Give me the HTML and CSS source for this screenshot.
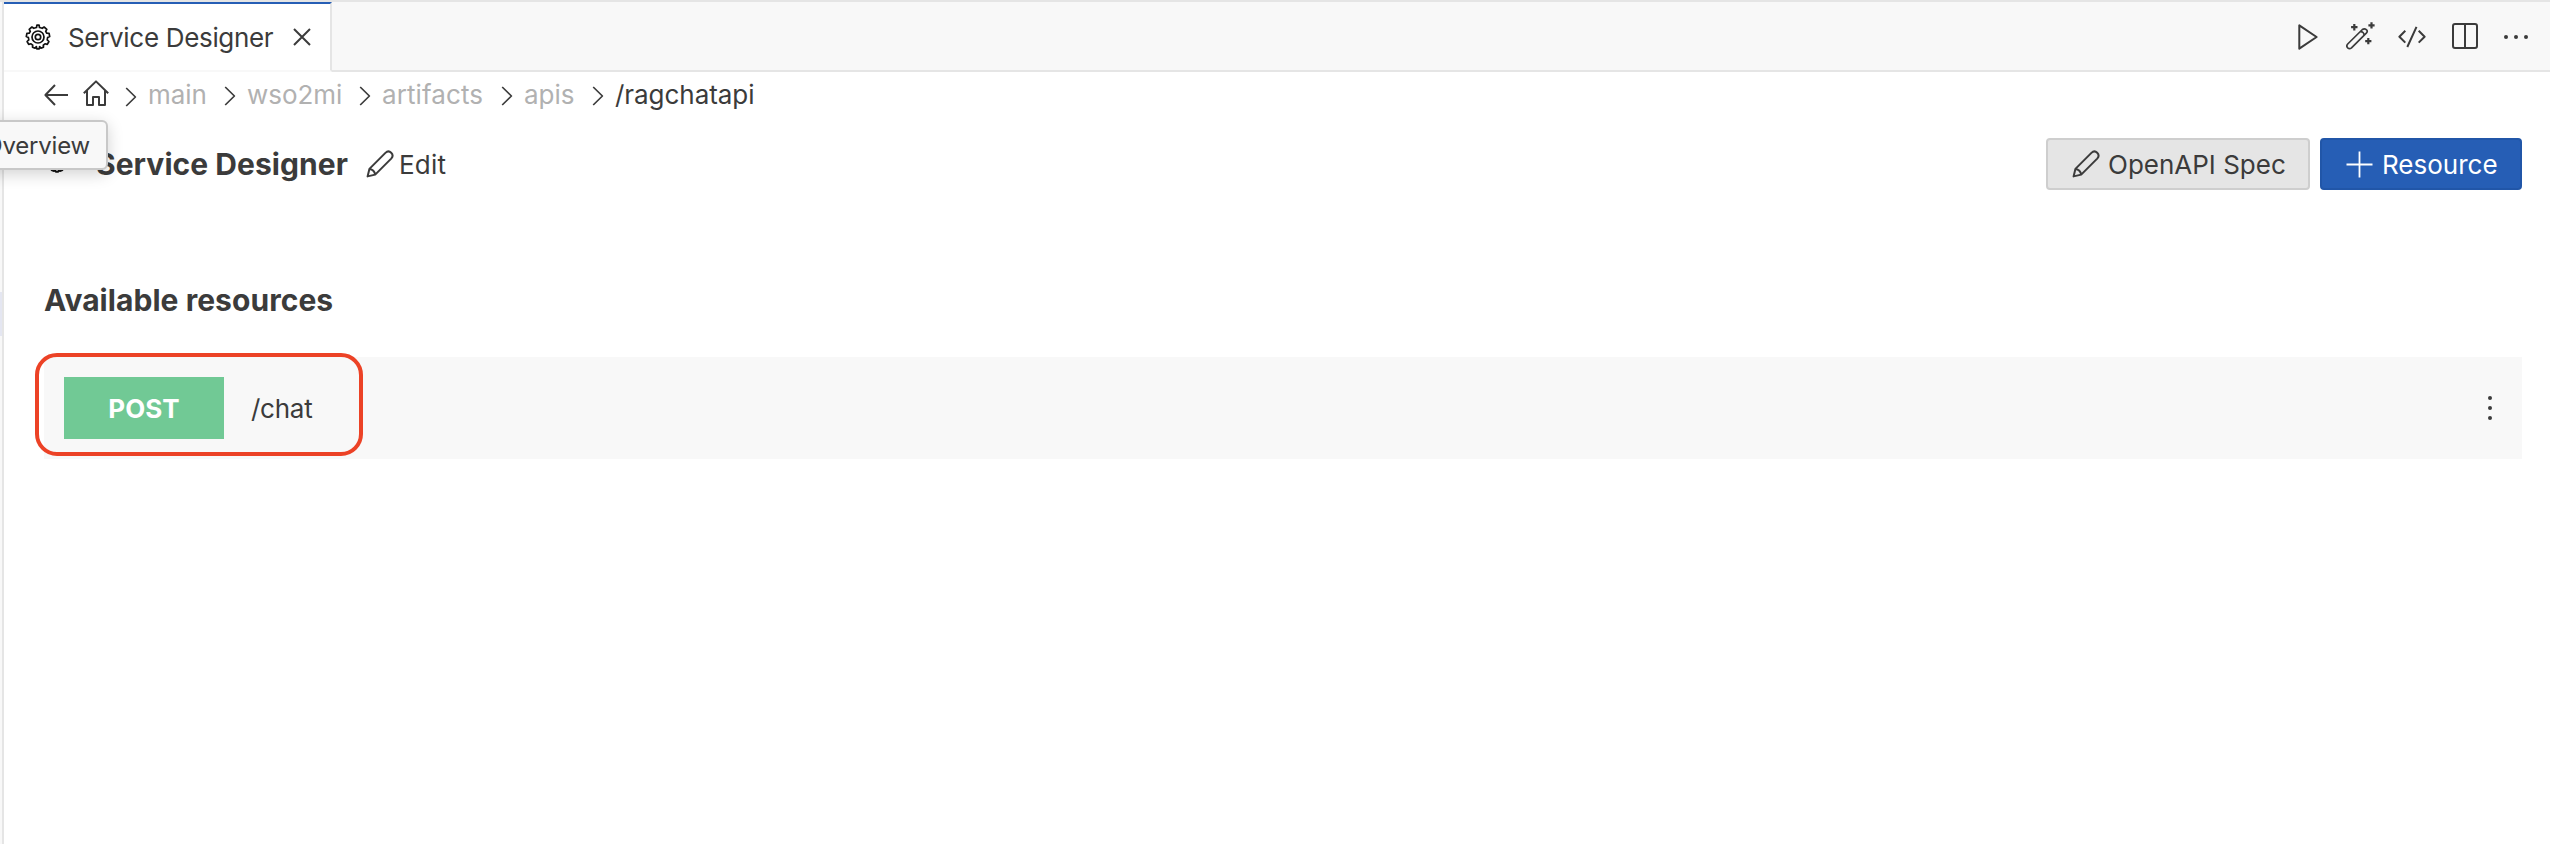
FILE: index.html
```html
<!DOCTYPE html>
<html lang="en">
<head>
<meta charset="utf-8">
<title>Service Designer</title>
<link rel="stylesheet" href="styles.css">
</head>
<body>
<svg class="defs" width="0" height="0">
  <symbol id="pencil" viewBox="0 0 28 28"><path d="M1.6 26.4 3.4 18.9 19.4 2.9Q22.4 0 25.2 2.8T25.2 8.6L9.2 24.6ZM3.4 18.9Q8.4 19.4 9.2 24.6"/></symbol>
  <symbol id="chevron" viewBox="0 0 12 20"><path d="M1.2 1 10.4 10 1.2 19"/></symbol>
  <symbol id="gear" viewBox="0 0 26 26"><path d="M11.5 3.5 11.9 1.2H14.1L14.5 3.5 17.2 4.3 19.1 3 21.8 5.3 20.7 7.3 21.8 9.2 24.1 9.3 24.7 12.6 22.6 13.6 22.2 15.9 23.9 17.5 22.3 20.4 20 19.8 18.3 21.2 18.5 23.2 16 24.1 14.6 22.6 14.2 24.8H11.8L11.4 22.6 10 24.1 7.5 23.2 7.7 21.2 6 19.8 3.7 20.4 2.1 17.5 3.8 15.9 3.4 13.6 1.3 12.6 1.9 9.3 4.2 9.2 5.3 7.3 4.2 5.3 6.9 3 8.8 4.3Z"/><circle cx="13" cy="13" r="6"/><circle cx="13" cy="13" r="2.7"/></symbol>
</svg>
<div class="window">
  <div class="sidebar-edge"><div class="sidebar-selection"></div></div>
  <main class="editor">
    <header class="tabbar">
      <div class="tab">
        <svg class="icon gear" width="26" height="26"><use href="#gear"/></svg>
        <span class="tab-title">Service Designer</span>
        <svg class="icon close" width="18" height="18" viewBox="0 0 18 18"><path d="M1 1 17 17M17 1 1 17"/></svg>
      </div>
      <div class="actions">
        <svg class="icon" width="20" height="26" viewBox="0 0 20 26"><path d="M1.3 1.3V24.7L18.6 13Z"/></svg>
        <svg class="icon wand" width="29" height="28" viewBox="0 0 29 28"><path d="M1.7 22 16.4 7.5Q18.4 6 20.3 7.6T20.3 11.2L5.5 25.8Q3.5 27.4 1.7 25.8T1.7 22ZM14.2 9.7Q18 9.5 18.1 13.3"/><path class="sparkle" d="M8.3 2V8.4M5.1 5.2H11.5M25.5 .2V6.4M22.4 3.3H28.6M22.3 16V22.2M19.2 19.1H25.4"/></svg>
        <svg class="icon code" width="28" height="22" viewBox="0 0 28 22"><path d="M7.3 4.8 1.4 10.7 7.3 16.6M20.7 4.8 26.6 10.7 20.7 16.6M18.5 .8 9.3 21"/></svg>
        <svg class="icon split" width="26" height="26" viewBox="0 0 26 26"><rect x="1" y="1" width="24" height="24" rx="2"/><path d="M13 1V25"/></svg>
        <svg class="dots more" width="26" height="6" viewBox="0 0 26 6"><circle cx="3" cy="3" r="2"/><circle cx="13" cy="3" r="2"/><circle cx="23" cy="3" r="2"/></svg>
      </div>
    </header>
    <nav class="breadcrumb">
      <svg class="icon back" width="25" height="22" viewBox="0 0 25 22"><path d="M11 1 1.4 11 11 21M1.4 11H24"/></svg>
      <svg class="icon home" width="26" height="26" viewBox="0 0 26 26"><path d="M.8 13.2 13 1.4 25.2 13.2M4 10.4V25H10V17H16V25H22V10.4"/></svg>
      <svg class="icon chevron first" width="12" height="20"><use href="#chevron"/></svg>
      <span class="crumb main">main</span>
      <svg class="icon chevron" width="12" height="20"><use href="#chevron"/></svg>
      <span class="crumb wso">wso2mi</span>
      <svg class="icon chevron" width="12" height="20"><use href="#chevron"/></svg>
      <span class="crumb artifacts">artifacts</span>
      <svg class="icon chevron" width="12" height="20"><use href="#chevron"/></svg>
      <span class="crumb apis">apis</span>
      <svg class="icon chevron" width="12" height="20"><use href="#chevron"/></svg>
      <span class="crumb current">/ragchatapi</span>
    </nav>
    <section class="heading">
      <svg class="icon gear" width="26" height="26"><use href="#gear"/></svg>
      <h1 class="title">Service Designer</h1>
      <svg class="icon pencil" width="28" height="28"><use href="#pencil"/></svg>
      <span class="edit">Edit</span>
      <div class="buttons">
        <div class="button secondary"><svg class="icon pencil" width="28" height="28"><use href="#pencil"/></svg><span class="spec">OpenAPI Spec</span></div>
        <div class="button primary"><svg class="icon plus" width="27" height="27" viewBox="0 0 27 27"><path d="M13.5 .5V26.5M.5 13.5H26.5"/></svg><span class="resource-label">Resource</span></div>
      </div>
    </section>
    <h2 class="subtitle"><span>Available resources</span></h2>
    <div class="resource">
      <div class="method">POST</div>
      <span class="path">/chat</span>
      <svg class="dots kebab" width="6" height="26" viewBox="0 0 6 26"><circle cx="3" cy="3" r="2"/><circle cx="3" cy="13" r="2"/><circle cx="3" cy="23" r="2"/></svg>
      <div class="highlight"></div>
    </div>
  </main>
  <div class="tooltip">Overview</div>
</div>
</body>
</html>
```
FILE: styles.css
```css
* { box-sizing: border-box; }
body { margin: 0; background: #fff; color: #3b3b3b; font: 26px/32px Inter, "Liberation Sans", sans-serif; overflow: hidden; }
h1, h2 { margin: 0; font-size: 30px; font-weight: 700; line-height: 36px; }
span, h1, h2 { white-space: nowrap; }
svg { display: block; flex: none; }
.defs { position: absolute; }
.icon { fill: none; stroke: #3b3b3b; stroke-width: 2; stroke-linejoin: round; }
.dots { fill: #3b3b3b; }
.window { position: relative; display: flex; width: 2550px; height: 844px; border-top: 2px solid #e5e5e5; overflow: hidden; }
.sidebar-edge { width: 4px; border-right: 2px solid #e5e5e5; background: #f8f8f8; padding-top: 290px; }
.sidebar-selection { height: 44px; background: #e4e6f1; }
.editor { flex: 1; min-width: 0; }
.tabbar { display: flex; height: 70px; background: #f8f8f8; }
.tab { display: flex; align-items: center; width: 328px; border-top: 2px solid #265eb5; border-right: 2px solid #e5e5e5; border-bottom: 2px solid #f8f8f8; background: #fff; padding-left: 21px; }
.icon.gear { stroke: #111; stroke-width: 1.7; }
.tab-title { width: 206px; margin: 2px 19px 0 17px; letter-spacing: -.32px; }
.actions { flex: 1; display: flex; align-items: center; justify-content: flex-end; padding: 2px 21px 0 0; border-bottom: 2px solid #e5e5e5; }
.wand { margin: -2px 0 0 28px; stroke-width: 1.7; }
.sparkle { stroke-width: 2.2; }
.code { margin-left: 23px; }
.split { margin: -3px 25px 0 26px; }
.breadcrumb { display: flex; align-items: center; height: 46px; padding-left: 40px; }
.home { margin: -4px 16px 0 14px; }
.chevron { margin: 2px 11px 0 17px; stroke-width: 1.7; }
.chevron.first { margin-left: 0; margin-top: 4px; }
.crumb { color: #b1b1b1; letter-spacing: -.05px; }
.main { width: 59px; }
.wso { width: 95px; }
.artifacts { width: 102px; letter-spacing: .1px; }
.apis { width: 51px; }
.current { color: #3b3b3b; }
.heading { display: flex; align-items: center; height: 52px; margin-top: 20px; padding: 0 28px 0 40px; }
.heading > .gear { margin-top: -8px; }
.title { width: 252px; margin-left: 26px; letter-spacing: .05px; }
.heading > .pencil { margin: 0 5px 0 18px; }
.edit, .spec, .resource-label { margin-top: 2px; }
.edit { letter-spacing: .2px; }
.buttons { display: flex; gap: 10px; margin-left: auto; }
.button { display: flex; align-items: center; height: 52px; border: 2px solid #cecece; border-radius: 4px; padding-left: 24px; }
.secondary { width: 264px; background: #e5e5e5; }
.spec { margin-left: 8px; }
.primary { width: 202px; border-color: #2156a8; background: #265eb5; color: #fff; }
.plus { stroke: #fff; stroke-width: 1.8; }
.resource-label { margin-left: 9px; }
.subtitle { margin: 92px 0 0 40px; letter-spacing: .05px; }
.resource { position: relative; display: flex; align-items: center; height: 102px; margin: 39px 28px 0 40px; padding: 0 29px 0 20px; background: #f8f8f8; }
.method { width: 160px; height: 62px; background: #71c995; color: #fff; font-weight: 700; line-height: 64px; text-align: center; }
.path { margin: 2px 0 0 27px; letter-spacing: -.25px; }
.kebab { margin-left: auto; }
.highlight { position: absolute; left: -9px; top: -4px; width: 328px; height: 103px; border: 4px solid #ec4226; border-radius: 22px; }
.tooltip { position: absolute; left: -40px; top: 118px; width: 148px; height: 50px; border: 2px solid #c8c8c8; border-radius: 6px; background: #f8f8f8; box-shadow: 0 4px 16px rgba(0,0,0,.18); padding-right: 16px; font-size: 24px; line-height: 48px; letter-spacing: -.2px; text-align: right; }
```
